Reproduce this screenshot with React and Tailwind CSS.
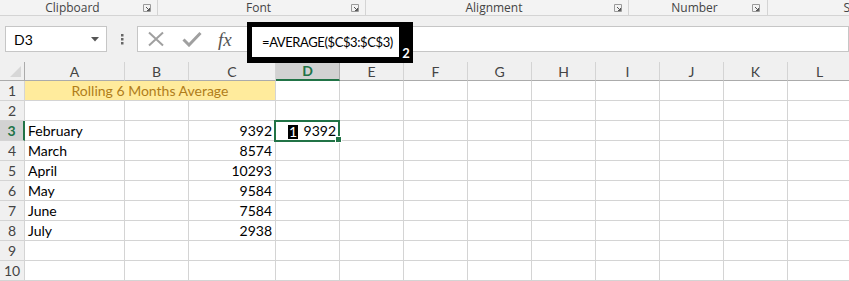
import React from 'react';

const FONT = { fontFamily: 'Lato, "Open Sans", sans-serif' };

const cols = ['A', 'B', 'C', 'D', 'E', 'F', 'G', 'H', 'I', 'J', 'K', 'L'];

const rows = [
  { n: 1, merged: 'Rolling 6 Months Average' },
  { n: 2 },
  { n: 3, a: 'February', c: '9392', active: true },
  { n: 4, a: 'March', c: '8574' },
  { n: 5, a: 'April', c: '10293' },
  { n: 6, a: 'May', c: '9584' },
  { n: 7, a: 'June', c: '7584' },
  { n: 8, a: 'July', c: '2938' },
  { n: 9 },
  { n: 10 },
];

const Launcher = () => (
  <svg width="8" height="8" viewBox="0 0 8 8" className="shrink-0">
    <path d="M0.5 0.5h7v7" fill="none" stroke="#9a9a9a" />
    <path d="M0.5 0.5v7h7" fill="none" stroke="#9a9a9a" />
    <path d="M3 3l3.5 3.5M6.5 4v2.5H4" fill="none" stroke="#555" />
  </svg>
);

const Group = ({ label, width, pad }) => (
  <div className={`flex items-center h-full border-r border-[#d4d4d4] ${pad}`} style={{ width }}>
    <span className="flex-1 text-center">{label}</span>
    <Launcher />
  </div>
);

const Cell = ({ children, right }) => (
  <div
    className={`h-5 border-r border-b border-[#d4d4d4] flex items-end pb-[1px] px-[3px] text-[14px] leading-[16px] text-black whitespace-nowrap overflow-hidden ${right ? 'justify-end' : ''}`}
  >
    {children}
  </div>
);

export default function App() {
  return (
    <div className="w-[849px] h-[281px] overflow-hidden bg-white relative" style={FONT}>
      {/* ribbon group labels */}
      <div
        className="h-[16px] flex bg-[#f3f3f3] border-b border-[#d4d4d4] text-[12px] text-[#444] leading-[15px] overflow-hidden"
        style={{ fontFamily: '"Open Sans", sans-serif' }}
      >
        <Group label="Clipboard" width={158} pad="pr-[6px] pl-[2px]" />
        <Group label="Font" width={208} pad="pr-[6px] pl-[8px]" />
        <Group label="Alignment" width={263} pad="pr-[6px] pl-[8px]" />
        <Group label="Number" width={139} pad="pr-[7px] pl-[8px]" />
        <div className="flex-1 flex justify-end items-center">
          <span className="translate-x-[1px]">S</span>
        </div>
      </div>

      <div className="h-[10px] bg-[#f0f0f0]" />

      {/* formula bar */}
      <div className="h-[26px] flex bg-[#f0f0f0]">
        <div className="ml-[5px] w-[102px] h-full bg-white border border-[#c6c6c6] flex items-center justify-between pl-[8px] pr-[7px]">
          <span className="text-[14px] text-black">D3</span>
          <svg width="8" height="5" viewBox="0 0 8 5">
            <path d="M0 0h8L4 4.5z" fill="#555" />
          </svg>
        </div>
        <div className="w-[30px] flex items-center justify-center">
          <svg width="3" height="11" viewBox="0 0 3 11">
            <rect x="0" y="0" width="2.5" height="2.5" fill="#666" />
            <rect x="0" y="4" width="2.5" height="2.5" fill="#666" />
            <rect x="0" y="8" width="2.5" height="2.5" fill="#666" />
          </svg>
        </div>
        <div className="w-[111px] h-full bg-white border border-r-0 border-[#c6c6c6] flex items-center pl-[8px]">
          <svg width="18" height="16" viewBox="0 0 18 16" className="ml-[1px]">
            <path d="M2 1.5l14 13M16 1.5l-14 13" stroke="#a0a0a0" strokeWidth="2" fill="none" />
          </svg>
          <svg width="20" height="16" viewBox="0 0 20 16" className="ml-[17px]">
            <path d="M1.5 8.5l5.5 5.5L18.5 2" stroke="#a0a0a0" strokeWidth="3" fill="none" />
          </svg>
          <span
            className="ml-[16px] text-[19px] italic text-[#555] leading-none"
            style={{ fontFamily: '"Liberation Serif", serif' }}
          >
            fx
          </span>
        </div>
        <div className="flex-1 h-full bg-white border border-[#c6c6c6]" />
      </div>

      <div className="h-[10px] bg-[#f0f0f0]" />

      {/* sheet grid */}
      <div className="grid grid-cols-[25px_100px_64px_87px_64px_64px_64px_64px_64px_64px_64px_64px_64px] w-[916px]">
        <div className="h-[19px] bg-[#f0f0f0] border-r border-b border-[#ababab] relative">
          <svg width="11" height="11" viewBox="0 0 11 11" className="absolute right-[3px] bottom-[3px]">
            <path d="M11 0V11H0z" fill="#d7d7d7" />
          </svg>
        </div>
        {cols.map((c) =>
          c === 'D' ? (
            <div
              key={c}
              className="h-[19px] bg-[#d2d2d2] border-r border-[#ababab] border-b-2 border-b-[#217346] flex items-center justify-center text-[14px] font-bold text-[#217346]"
            >
              {c}
            </div>
          ) : (
            <div
              key={c}
              className="h-[19px] bg-[#f0f0f0] border-r border-b border-[#ababab] border-r-[#d4d4d4] flex items-center justify-center text-[14px] text-[#444]"
            >
              {c}
            </div>
          )
        )}

        {rows.map((r) => (
          <React.Fragment key={r.n}>
            {r.active ? (
              <div className="h-5 bg-[#d2d2d2] border-b border-[#d4d4d4] border-r-2 border-r-[#217346] flex items-center justify-center text-[14px] font-bold text-[#217346]">
                {r.n}
              </div>
            ) : (
              <div className="h-5 bg-[#f0f0f0] border-r border-b border-[#d4d4d4] flex items-center justify-center text-[14px] text-[#444]">
                {r.n}
              </div>
            )}
            {r.merged ? (
              <div className="col-span-3 h-5 bg-[#ffeb9c] border-b border-r border-b-[#d4d4d4] border-r-[#d4d4d4] flex items-end justify-center pb-[1px] text-[14px] leading-[16px] text-[#b07d1a]">
                {r.merged}
              </div>
            ) : (
              <>
                <Cell>{r.a}</Cell>
                <Cell />
                <Cell right>{r.c}</Cell>
              </>
            )}
            {r.active ? (
              <div className="h-5 relative border-r border-b border-[#d4d4d4]">
                <div className="absolute -left-[2px] -top-[1px] w-[66px] h-[22px] border-2 border-[#217346] flex items-end justify-between pl-[12px] pr-[2px] pb-[1px] text-[14px] leading-[16px]">
                  <span className="bg-black text-white w-[10px] h-[14px] flex items-center justify-center text-[14px]">1</span>
                  <span>9392</span>
                </div>
                <div className="absolute -right-[3px] -bottom-[3px] w-[5px] h-[5px] bg-[#217346] border border-white box-content" />
              </div>
            ) : (
              <Cell />
            )}
            {cols.slice(4).map((c) => (
              <Cell key={c} />
            ))}
          </React.Fragment>
        ))}
      </div>

      {/* annotation 2 around formula */}
      <div className="absolute left-[247px] top-[22px] w-[166px] h-[41px] border-[5px] border-b-[6px] border-r-[14px] border-black bg-white flex items-center pl-[10px]">
        <span className="text-[13px] tracking-[-0.4px] text-black leading-none whitespace-nowrap">=AVERAGE($C$3:$C$3)</span>
        <span className="absolute -right-[12px] bottom-[-3px] text-white text-[13px] font-bold leading-none w-[10px] text-center">
          2
        </span>
      </div>
    </div>
  );
}
